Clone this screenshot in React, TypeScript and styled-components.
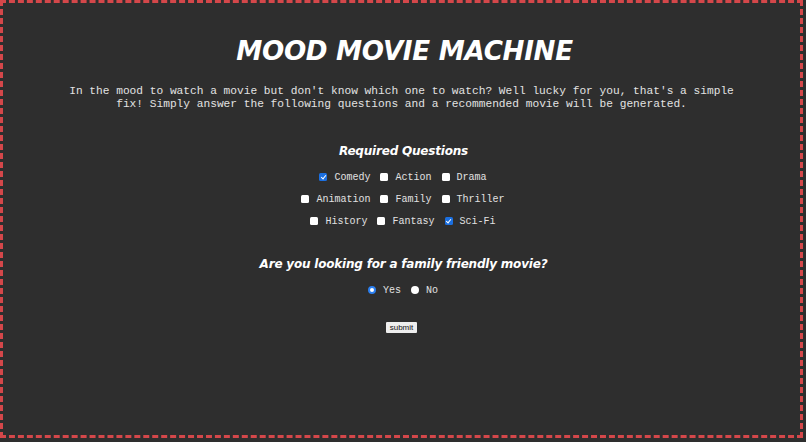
import React from "react";
import styled, { createGlobalStyle } from "styled-components";

const Global = createGlobalStyle`
  html, body { margin: 0; padding: 0; background: #2e2e2e; }
  #root { width: 806px; height: 442px; }
`;

const Page = styled.div`
  box-sizing: border-box;
  width: 803px;
  height: 438px;
  border: 3px dashed #d4474a;
  background: #2e2e2e;
  display: flex;
  flex-direction: column;
  align-items: center;
  color: #fff;
`;

const Title = styled.h1`
  margin: 31px 0 0;
  padding-left: 6px;
  font-family: "DejaVu Sans", Verdana, sans-serif;
  font-weight: bold;
  font-style: italic;
  font-size: 26.2px;
  line-height: 34px;
  letter-spacing: -0.3px;
  color: #fff;
`;

const Intro = styled.p`
  margin: 17px 0 0;
  width: 672px;
  text-align: center;
  font-family: "Liberation Mono", "Courier New", monospace;
  font-size: 11.2px;
  line-height: 13px;
  color: #e2e2e2;
`;

const Heading = styled.h2<{ $top: number }>`
  margin: ${(p) => p.$top}px 0 0;
  padding-left: 4px;
  font-family: "DejaVu Sans", Verdana, sans-serif;
  font-weight: bold;
  font-style: italic;
  font-size: 12px;
  line-height: 18px;
  letter-spacing: -0.2px;
  color: #fff;
`;

const Row = styled.div<{ $top: number }>`
  margin-top: ${(p) => p.$top}px;
  padding-left: 3px;
  display: flex;
  align-items: center;
  gap: 10px;
  height: 14px;
`;

const Option = styled.label`
  display: flex;
  align-items: center;
  gap: 7px;
  font-family: "Liberation Mono", "Courier New", monospace;
  font-size: 10px;
  line-height: 14px;
  color: #e2e2e2;
`;

const Check = styled.input`
  appearance: none;
  margin: 0 0 2px;
  width: 8px;
  height: 8px;
  border-radius: 1.5px;
  background: #fff;
  position: relative;
  &:checked {
    background: #1b6fe0;
  }
  &:checked::after {
    content: "";
    position: absolute;
    left: 2.4px;
    top: 0.5px;
    width: 2px;
    height: 4.2px;
    border: solid #fff;
    border-width: 0 1.3px 1.3px 0;
    transform: rotate(40deg);
  }
`;

const Radio = styled.input`
  appearance: none;
  margin: 0 0 2px;
  width: 8px;
  height: 8px;
  border-radius: 50%;
  background: #fff;
  box-sizing: border-box;
  &:checked {
    border: 2.4px solid #2b7ff0;
    background: #fff;
  }
`;

const Submit = styled.button`
  margin-top: 24px;
  width: 31px;
  height: 11px;
  padding: 0;
  border: none;
  border-radius: 1px;
  background: #eeeeee;
  color: #111;
  font-family: "Liberation Sans", Arial, sans-serif;
  font-size: 8px;
  line-height: 11px;
`;

const rows = [
  [
    ["Comedy", true],
    ["Action", false],
    ["Drama", false],
  ],
  [
    ["Animation", false],
    ["Family", false],
    ["Thriller", false],
  ],
  [
    ["History", false],
    ["Fantasy", false],
    ["Sci-Fi", true],
  ],
] as [string, boolean][][];

export default function App() {
  return (
    <>
      <Global />
      <Page>
        <Title>MOOD MOVIE MACHINE</Title>
        <Intro>
          In the mood to watch a movie but don't know which one to watch? Well lucky for you, that's a
          simple fix! Simply answer the following questions and a recommended movie will be generated.
        </Intro>
        <Heading $top={31}>Required Questions</Heading>
        {rows.map((r, i) => (
          <Row key={i} $top={i === 0 ? 11 : 8}>
            {r.map(([name, checked]) => (
              <Option key={name}>
                <Check type="checkbox" defaultChecked={checked} />
                {name}
              </Option>
            ))}
          </Row>
        ))}
        <Heading $top={26}>Are you looking for a family friendly movie?</Heading>
        <Row $top={11}>
          <Option>
            <Radio type="radio" name="family" defaultChecked />
            Yes
          </Option>
          <Option>
            <Radio type="radio" name="family" />
            No
          </Option>
        </Row>
        <Submit>submit</Submit>
      </Page>
    </>
  );
}
